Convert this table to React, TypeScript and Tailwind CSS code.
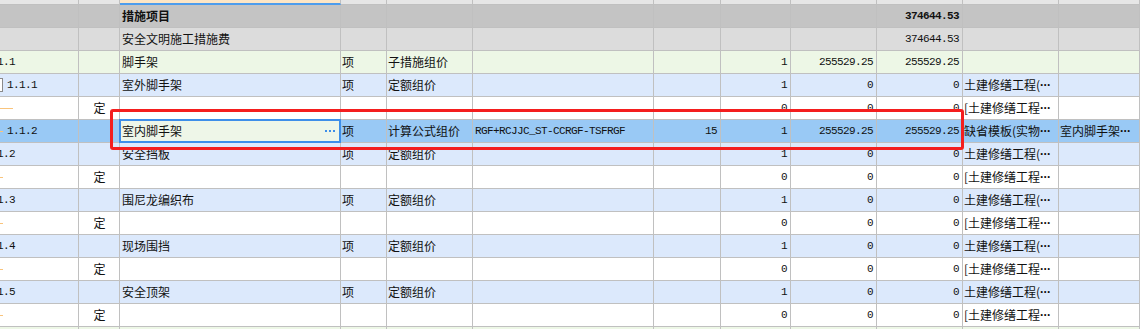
import React from "react";

const COLS = "grid w-[1140px] grid-cols-[79px_41px_221px_46px_86px_181px_67px_70px_86px_86px_96px_81px]";
const CJK = "font-['Noto_Sans_CJK_SC','Noto_Sans',sans-serif]";
const MONO = "font-['Liberation_Mono',monospace] text-[11px] tracking-[-0.6px]";
const CELL = "border-r border-b border-[#c0c0c0] overflow-hidden flex items-center whitespace-nowrap relative";

type Row = {
  bg: string;
  c0?: React.ReactNode;
  ding?: boolean;
  name?: string;
  bold?: boolean;
  unit?: string;
  type?: string;
  formula?: string;
  rate?: string;
  qty?: string;
  price?: string;
  total?: string;
  tpl?: string;
  extra?: string;
  editing?: boolean;
};

const Num = ({ v, bold }: { v?: string; bold?: boolean }) =>
  v ? (
    <span className={`${MONO} ml-auto pr-[3px] text-[#111] ${bold ? "font-bold" : ""}`}>{v}</span>
  ) : null;

const Dash = ({ w }: { w: number }) => (
  <span className="absolute left-0 top-1/2 h-px bg-[#f9c47c]" style={{ width: w }} />
);

const Label = ({ text, left }: { text: string; left: number }) => (
  <span className={`${MONO} absolute text-[#111]`} style={{ left }}>
    {text}
  </span>
);

const rows: Row[] = [
  { bg: "bg-[#c4c4c4]", name: "措施项目", bold: true, total: "374644.53" },
  { bg: "bg-[#dcdcdc]", name: "安全文明施工措施费", total: "374644.53" },
  {
    bg: "bg-[#edf7e6]",
    c0: <Label text="1.1" left={-3} />,
    name: "脚手架",
    unit: "项",
    type: "子措施组价",
    qty: "1",
    price: "255529.25",
    total: "255529.25",
  },
  {
    bg: "bg-[#dce9fc]",
    c0: (
      <>
        <span className="absolute left-[-11px] top-[4px] w-[14px] h-[14px] border border-[#8a8a8a] bg-white" />
        <Label text="1.1.1" left={7} />
      </>
    ),
    name: "室外脚手架",
    unit: "项",
    type: "定额组价",
    qty: "1",
    price: "0",
    total: "0",
    tpl: "土建修缮工程(",
  },
  { bg: "bg-white", c0: <Dash w={13} />, ding: true, qty: "0", price: "0", total: "0", tpl: "[土建修缮工程" },
  {
    bg: "bg-[#99c9f5]",
    c0: (
      <>
        <Dash w={3} />
        <Label text="1.1.2" left={7} />
      </>
    ),
    name: "室内脚手架",
    editing: true,
    unit: "项",
    type: "计算公式组价",
    formula: "RGF+RCJJC_ST-CCRGF-TSFRGF",
    rate: "15",
    qty: "1",
    price: "255529.25",
    total: "255529.25",
    tpl: "缺省模板(实物",
    extra: "室内脚手架",
  },
  {
    bg: "bg-[#dce9fc]",
    c0: <Label text="1.2" left={-3} />,
    name: "安全挡板",
    unit: "项",
    type: "定额组价",
    qty: "1",
    price: "0",
    total: "0",
    tpl: "土建修缮工程(",
  },
  { bg: "bg-white", c0: <Dash w={3} />, ding: true, qty: "0", price: "0", total: "0", tpl: "[土建修缮工程" },
  {
    bg: "bg-[#dce9fc]",
    c0: <Label text="1.3" left={-3} />,
    name: "围尼龙编织布",
    unit: "项",
    type: "定额组价",
    qty: "1",
    price: "0",
    total: "0",
    tpl: "土建修缮工程(",
  },
  { bg: "bg-white", c0: <Dash w={3} />, ding: true, qty: "0", price: "0", total: "0", tpl: "[土建修缮工程" },
  {
    bg: "bg-[#dce9fc]",
    c0: <Label text="1.4" left={-3} />,
    name: "现场围挡",
    unit: "项",
    type: "定额组价",
    qty: "1",
    price: "0",
    total: "0",
    tpl: "土建修缮工程(",
  },
  { bg: "bg-white", c0: <Dash w={3} />, ding: true, qty: "0", price: "0", total: "0", tpl: "[土建修缮工程" },
  {
    bg: "bg-[#dce9fc]",
    c0: <Label text="1.5" left={-3} />,
    name: "安全顶架",
    unit: "项",
    type: "定额组价",
    qty: "1",
    price: "0",
    total: "0",
    tpl: "土建修缮工程(",
  },
  { bg: "bg-white", c0: <Dash w={3} />, ding: true, qty: "0", price: "0", total: "0", tpl: "[土建修缮工程" },
];

const Txt = ({ v, bold, pl = 2 }: { v?: string; bold?: boolean; pl?: number }) =>
  v ? (
    <span className={`${CJK} text-[12px] leading-none text-[#111] ${bold ? "font-bold" : ""}`} style={{ paddingLeft: pl }}>
      {v}
    </span>
  ) : null;

const Trunc = ({ v }: { v?: string }) =>
  v ? (
    <span className="flex items-center pl-[1px]">
      <span className={`${CJK} text-[12px] leading-none text-[#111]`}>{v}</span>
      <span className="font-['Liberation_Sans',sans-serif] text-[12px] leading-none tracking-[-0.5px] text-[#111] font-bold">···</span>
    </span>
  ) : null;

function TableRow({ r }: { r: Row }) {
  return (
    <div className={`${COLS} h-[23px] ${r.bg}`}>
      <div className={CELL}>{r.c0}</div>
      <div className={`${CELL} justify-center`}>
        {r.ding ? <span className={`${CJK} text-[12px] leading-none text-[#111] pl-[1px]`}>定</span> : null}
      </div>
      <div className={`${CELL} !overflow-visible`}>
        {r.editing ? (
          <div className="absolute left-[-1px] top-[-1px] right-[-1px] bottom-[-1px] border-2 border-[#3d8ee9] bg-[#eef6e8] flex items-center z-10">
            <span className={`${CJK} text-[12px] leading-none text-[#111] pl-[1px]`}>{r.name}</span>
            <span className="ml-auto mr-[4px] flex gap-[2px] items-center">
              <span className="w-[2px] h-[2px] bg-[#3d8ee9]" />
              <span className="w-[2px] h-[2px] bg-[#3d8ee9]" />
              <span className="w-[2px] h-[2px] bg-[#3d8ee9]" />
            </span>
          </div>
        ) : (
          <Txt v={r.name} bold={r.bold} />
        )}
      </div>
      <div className={CELL}>
        <Txt v={r.unit} pl={1} />
      </div>
      <div className={CELL}>
        <Txt v={r.type} pl={1} />
      </div>
      <div className={CELL}>
        {r.formula ? <span className={`${MONO} pl-[2px] text-[#111]`}>{r.formula}</span> : null}
      </div>
      <div className={CELL}>
        <Num v={r.rate} />
      </div>
      <div className={CELL}>
        <Num v={r.qty} />
      </div>
      <div className={CELL}>
        <Num v={r.price} />
      </div>
      <div className={CELL}>
        <Num v={r.total} bold={r.bold} />
      </div>
      <div className={CELL}>
        <Trunc v={r.tpl} />
      </div>
      <div className={CELL}>
        <Trunc v={r.extra} />
      </div>
    </div>
  );
}

export default function App() {
  return (
    <div className="relative w-[1147px] h-[329px] overflow-hidden bg-white">
      <div className={`${COLS} h-[5px] bg-[#e6e6e6]`}>
        {Array.from({ length: 12 }).map((_, i) =>
          i === 2 ? (
            <div key={i} className="border-r border-[#c0c0c0] bg-[#fde6c6] border-b-2 border-b-[#4e9ded]" />
          ) : (
            <div key={i} className="border-r border-b border-[#c0c0c0]" />
          )
        )}
      </div>
      {rows.map((r, i) => (
        <TableRow key={i} r={r} />
      ))}
      <div className={`${COLS} h-[10px] bg-[#edf7e6]`}>
        {Array.from({ length: 12 }).map((_, i) => (
          <div key={i} className="border-r border-[#c0c0c0]" />
        ))}
      </div>
      <div className="absolute left-[110px] top-[109px] w-[854px] h-[41px] border-[3px] border-[#f41e1e] rounded-[3px] z-20 pointer-events-none" />
    </div>
  );
}
